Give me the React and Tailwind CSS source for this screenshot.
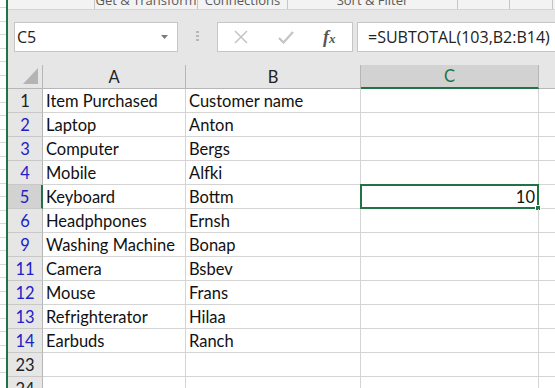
import React from "react";

const rows = [
  { n: "1", a: "Item Purchased", b: "Customer name", blue: false },
  { n: "2", a: "Laptop", b: "Anton", blue: true },
  { n: "3", a: "Computer", b: "Bergs", blue: true },
  { n: "4", a: "Mobile", b: "Alfki", blue: true },
  { n: "5", a: "Keyboard", b: "Bottm", blue: true, sel: true },
  { n: "6", a: "Headphpones", b: "Ernsh", blue: true },
  { n: "9", a: "Washing Machine", b: "Bonap", blue: true },
  { n: "11", a: "Camera", b: "Bsbev", blue: true },
  { n: "12", a: "Mouse", b: "Frans", blue: true },
  { n: "13", a: "Refrighterator", b: "Hilaa", blue: true },
  { n: "14", a: "Earbuds", b: "Ranch", blue: true },
  { n: "23", a: "", b: "", blue: false },
  { n: "24", a: "", b: "", blue: false },
];

const cellFont = { fontFamily: "Lato, 'Open Sans', sans-serif" };

export default function App() {
  return (
    <div className="flex h-[388px] w-[555px] overflow-hidden bg-white" style={{ fontFamily: "'Open Sans', sans-serif" }}>
      {/* background window strip */}
      <div className="flex w-[6px] shrink-0 flex-col bg-white pt-[7px]">
        {Array.from({ length: 28 }).map((_, i) => (
          <div key={i} className="h-[13.5px] shrink-0 border-t border-[#d8d8d8]" />
        ))}
      </div>
      <div className="w-[2px] shrink-0 bg-[#217346]" />
      <div className="flex min-w-0 flex-1 flex-col overflow-hidden">
        {/* ribbon bottom */}
        <div className="flex h-[10px] shrink-0 overflow-hidden border-b border-[#d5d5d5] bg-[#f3f3f3] text-[13px] leading-[13px] text-[#5a5a5a]">
          <div className="w-[86px] shrink-0" />
          <div className="flex w-[103px] shrink-0 justify-center border-l border-[#c6c6c6]"><span className="-mt-[6px] whitespace-nowrap">Get &amp; Transform</span></div>
          <div className="flex w-[90px] shrink-0 justify-center border-l border-[#c6c6c6]"><span className="-mt-[6px] whitespace-nowrap">Connections</span></div>
          <div className="flex w-[170px] shrink-0 justify-center border-l border-[#c6c6c6]"><span className="-mt-[6px] whitespace-nowrap">Sort &amp; Filter</span></div>
          <div className="w-[52px] shrink-0 border-l border-[#c6c6c6]" />
          <div className="w-[43px] shrink-0 border-l border-[#c6c6c6]" />
          <div className="flex-1 border-l border-[#c6c6c6]" />
        </div>
        {/* formula bar */}
        <div className="flex h-[55px] shrink-0 items-start bg-[#e6e6e6] pt-[12px]">
          <div className="ml-[6px] flex h-[30px] w-[164px] shrink-0 items-center justify-between border border-[#c6c6c6] bg-white pl-[2px] pr-[9px] text-[16px] text-[#222]">
            <span>C5</span>
            <svg width="7" height="4" viewBox="0 0 7 4"><path d="M0 0h7L3.5 4z" fill="#7a7a7a" /></svg>
          </div>
          <div className="flex w-[39px] shrink-0 flex-col items-center gap-[2px] pt-[9px]">
            <div className="h-[2px] w-[3px] bg-[#b8b8b8]" />
            <div className="h-[2px] w-[3px] bg-[#b8b8b8]" />
            <div className="h-[2px] w-[3px] bg-[#b8b8b8]" />
          </div>
          <div className="flex h-[30px] w-[136px] shrink-0 items-center border border-[#c6c6c6] bg-white">
            <svg className="ml-[16px]" width="14" height="14" viewBox="0 0 14 14"><path d="M1 1L13 13M13 1L1 13" stroke="#c4c4c4" strokeWidth="1.5" /></svg>
            <svg className="ml-[30px]" width="16" height="13" viewBox="0 0 16 13"><path d="M1 7l4.5 4.5L15 1" stroke="#c4c4c4" strokeWidth="2.2" fill="none" /></svg>
            <span className="ml-[29px] text-[18px] font-bold italic text-[#555]" style={{ fontFamily: "'Liberation Serif', serif" }}>f<span className="text-[13px]">x</span></span>
          </div>
          <div className="ml-[4px] flex h-[30px] w-[220px] shrink-0 items-center border border-[#c6c6c6] bg-white pl-[10px] text-[16px] text-[#222]">
            <span className="whitespace-nowrap">=SUBTOTAL(103,B2:B14)</span>
          </div>
        </div>
        {/* column headers */}
        <div className="flex h-[24px] shrink-0 bg-[#e6e6e6] text-[16.5px] text-[#222]" style={cellFont}>
          <div className="relative w-[35px] shrink-0 border-b border-r border-[#b6b6b6]">
            <svg className="absolute left-[15px] top-[3px]" width="15" height="16" viewBox="0 0 15 16"><path d="M15 0V16H0z" fill="#b4b4b4" /></svg>
          </div>
          <div className="flex w-[143px] shrink-0 items-center justify-center border-b border-r border-[#b6b6b6] pt-[1px]">A</div>
          <div className="flex w-[175px] shrink-0 items-center justify-center border-b border-r border-[#b6b6b6] pt-[1px]">B</div>
          <div className="flex w-[178px] shrink-0 items-center justify-center border-b-2 border-r border-b-[#217346] border-r-[#b6b6b6] bg-[#d2d2d2] pt-[1px] text-[#217346]">C</div>
          <div className="flex-1 border-b border-[#b6b6b6]" />
        </div>
        {rows.map((r) => (
          <div key={r.n} className="flex h-[24px] shrink-0 text-[16.5px] text-[#111]" style={cellFont}>
            <div
              className={
                "flex w-[35px] shrink-0 items-center justify-center border-b border-b-[#c8c8c8] pt-[1px] " +
                (r.sel ? "border-r-2 border-r-[#217346] bg-[#d2d2d2] " : "border-r border-r-[#b6b6b6] bg-[#e6e6e6] ") +
                (r.blue ? "text-[#2020c8]" : "text-[#222]")
              }
            >
              {r.n}
            </div>
            <div className="flex w-[143px] shrink-0 items-center whitespace-nowrap border-b border-r border-[#d4d4d4] pl-[3px] pt-[1px]">{r.a}</div>
            <div className="flex w-[175px] shrink-0 items-center whitespace-nowrap border-b border-r border-[#d4d4d4] pl-[3px] pt-[1px]">{r.b}</div>
            <div className="relative flex w-[178px] shrink-0 items-center justify-end border-b border-r border-[#d4d4d4] pr-[3px] pt-[1px]">
              {r.sel && (
                <>
                  <span>10</span>
                  <div className="absolute -left-[1px] -top-[1px] h-[25px] w-[179px] border-2 border-[#217346]" />
                  <div className="absolute -bottom-[3px] -right-[3px] h-[6px] w-[6px] border border-white bg-[#217346]" />
                </>
              )}
            </div>
            <div className="flex-1 border-b border-[#d4d4d4]" />
          </div>
        ))}
      </div>
    </div>
  );
}
